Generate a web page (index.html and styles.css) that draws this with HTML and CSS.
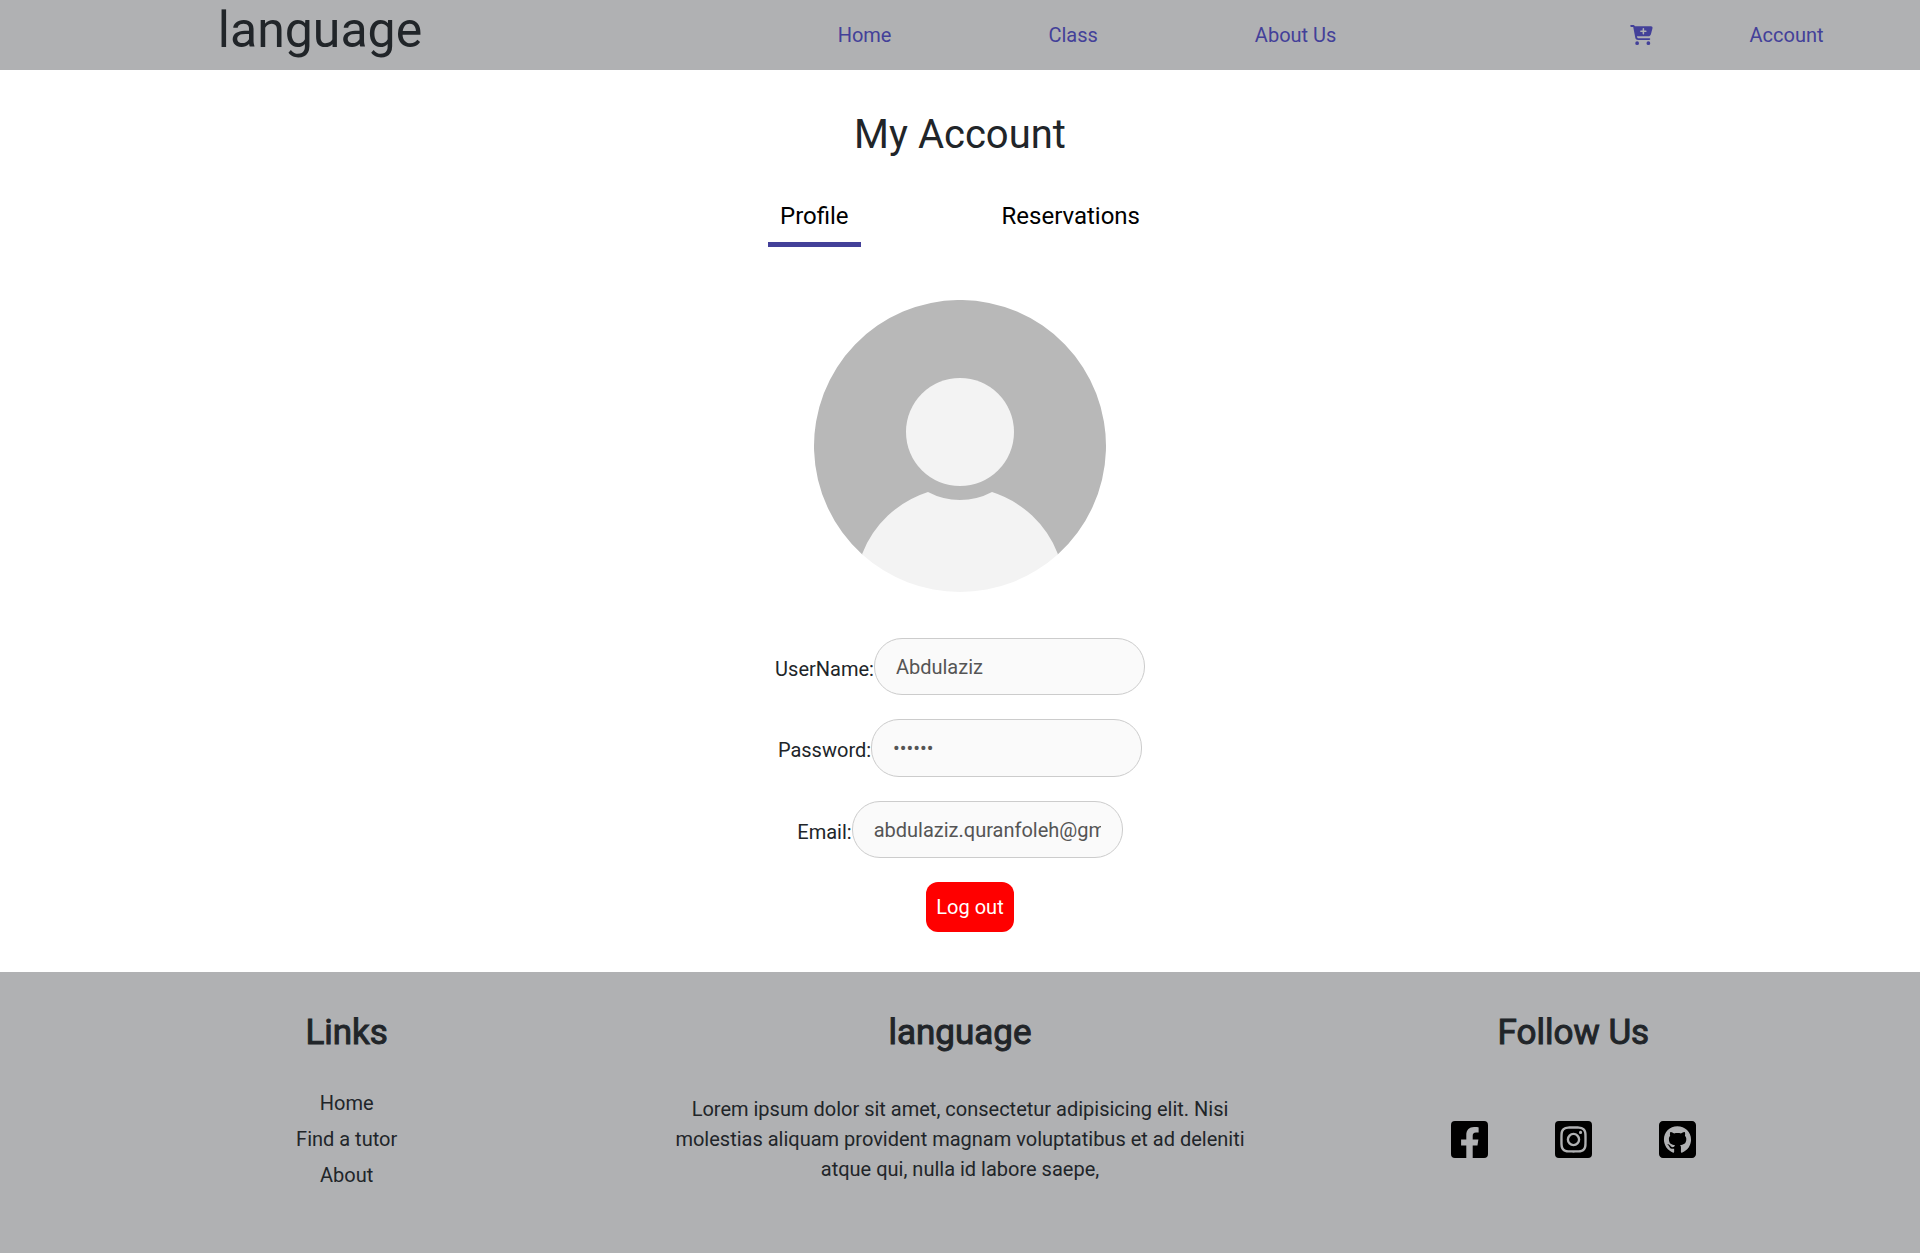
FILE: index.html
```html
<!DOCTYPE html>
<html lang="en">
<head>
<meta charset="utf-8">
<title>My Account</title>
<link rel="stylesheet" href="styles.css">
</head>
<body>
<header class="header">
  <a class="logo" href="#">language</a>
  <nav class="nav">
    <a href="#">Home</a>
    <a href="#">Class</a>
    <a href="#">About Us</a>
  </nav>
  <div class="actions">
    <a class="cart" href="#" aria-label="Cart">
      <svg viewBox="0 0 576 512" width="23" height="20" fill="currentColor"><path d="M24 0C10.700 0 0 10.700 0 24S10.700 48 24 48H69.500c3.800 0 7.100 2.700 7.900 6.500l51.600 271c6.500 34 36.200 58.500 70.700 58.500H488c13.300 0 24-10.700 24-24s-10.700-24-24-24H199.700c-11.500 0-21.400-8.200-23.600-19.500L170.700 288H459.200c32.600 0 61.100-21.800 69.500-53.300l41-152.300C576.600 57 557.400 32 531.100 32H360 120.100C111 12.800 91.600 0 69.500 0H24zM176 512a48 48 0 1 0 0-96 48 48 0 1 0 0 96zm336-48a48 48 0 1 0-96 0 48 48 0 1 0 96 0zM252 160c0-11 9-20 20-20h44V96c0-11 9-20 20-20s20 9 20 20v44h44c11 0 20 9 20 20s-9 20-20 20H356v44c0 11-9 20-20 20s-20-9-20-20V180H272c-11 0-20-9-20-20z"/></svg>
    </a>
    <a href="#">Account</a>
  </div>
</header>

<main class="account">
  <h1 class="title">My Account</h1>
  <nav class="tabs">
    <a class="tab tab-active" href="#">Profile</a>
    <a class="tab" href="#">Reservations</a>
  </nav>
  <svg class="avatar" viewBox="0 0 292 292" role="img" aria-label="Profile picture">
    <path d="M48 254.200A146 146 0 1 1 244 254.200L146 270z" fill="#b8b8b8"/>
    <path d="M48 254.200A105 105 0 0 1 114 192A68 68 0 0 0 178 192A105 105 0 0 1 244 254.200A146 146 0 0 1 48 254.200z" fill="#f3f3f3"/>
    <circle cx="146" cy="132" r="54" fill="#f3f3f3"/>
  </svg>
  <form class="form">
    <div class="field">
      <label for="username">UserName:</label>
      <input id="username" type="text" value="Abdulaziz">
    </div>
    <div class="field">
      <label for="password">Password:</label>
      <input id="password" type="password" value="secret">
    </div>
    <div class="field">
      <label for="email">Email:</label>
      <input id="email" type="email" value="abdulaziz.quranfoleh@gmail.com">
    </div>
    <button class="logout" type="button">Log out</button>
  </form>
</main>

<footer class="footer">
  <section class="column">
    <h2>Links</h2>
    <div class="content links">
      <a href="#">Home</a>
      <a href="#">Find a tutor</a>
      <a href="#">About</a>
    </div>
  </section>
  <section class="column">
    <h2>language</h2>
    <div class="content">
      <p>Lorem ipsum dolor sit amet, consectetur adipisicing elit. Nisi molestias aliquam provident magnam voluptatibus et ad deleniti atque qui, nulla id labore saepe,</p>
    </div>
  </section>
  <section class="column">
    <h2>Follow Us</h2>
    <div class="content social">
      <a href="#" aria-label="Facebook"><svg viewBox="0 32 448 448"><path d="M400 32H48A48 48 0 0 0 0 80v352a48 48 0 0 0 48 48h137.250V327.690h-63V256h63v-54.640c0-62.150 37-96.480 93.670-96.480 27.140 0 55.520 4.840 55.520 4.840v61h-31.270c-30.810 0-40.420 19.120-40.420 38.730V256h68.780l-11 71.690h-57.780V480H400a48 48 0 0 0 48-48V80a48 48 0 0 0-48-48z"/></svg></a>
      <a href="#" aria-label="Instagram"><svg viewBox="0 32 448 448"><path d="M224,202.660A53.340,53.340,0,1,0,277.360,256,53.380,53.380,0,0,0,224,202.660Zm124.710-41a54,54,0,0,0-30.410-30.410c-21-8.290-71-6.430-94.300-6.430s-73.250-1.930-94.310,6.430a54,54,0,0,0-30.410,30.410c-8.280,21-6.430,71.050-6.430,94.330S91,329.260,99.320,350.330a54,54,0,0,0,30.410,30.410c21,8.290,71,6.430,94.310,6.430s73.240,1.930,94.300-6.430a54,54,0,0,0,30.410-30.410c8.350-21,6.430-71.050,6.430-94.330S357.100,182.740,348.750,161.670ZM224,338a82,82,0,1,1,82-82A81.900,81.900,0,0,1,224,338Zm85.380-148.300a19.140,19.140,0,1,1,19.130-19.140A19.100,19.100,0,0,1,309.420,189.740ZM400,32H48A48,48,0,0,0,0,80V432a48,48,0,0,0,48,48H400a48,48,0,0,0,48-48V80A48,48,0,0,0,400,32ZM382.880,322c-1.290,25.630-7.140,48.340-25.850,67s-41.400,24.630-67,25.850c-26.410,1.490-105.590,1.490-132,0-25.630-1.290-48.260-7.150-67-25.850s-24.630-41.420-25.850-67c-1.490-26.420-1.490-105.610,0-132,1.290-25.630,7.070-48.340,25.850-67s41.470-24.560,67-25.780c26.410-1.490,105.590-1.490,132,0,25.630,1.290,48.330,7.150,67,25.850s24.630,41.420,25.850,67.050C384.370,216.440,384.370,295.560,382.880,322Z"/></svg></a>
      <a href="#" aria-label="GitHub"><svg viewBox="0 32 448 448"><path d="M400 32H48C21.500 32 0 53.500 0 80v352c0 26.500 21.500 48 48 48h352c26.500 0 48-21.500 48-48V80c0-26.500-21.500-48-48-48zM277.300 415.700c-8.400 1.500-11.500-3.700-11.500-8 0-5.400.2-33 .2-55.300 0-15.600-5.200-25.500-11.300-30.700 37-4.100 76-9.200 76-73.100 0-18.200-6.500-27.300-17.100-39 1.700-4.300 7.400-22-1.700-45-13.900-4.300-45.700 17.900-45.700 17.900-13.200-3.700-27.500-5.600-41.600-5.600-14.100 0-28.400 1.900-41.600 5.600 0 0-31.800-22.200-45.700-17.900-9.100 22.900-3.500 40.600-1.700 45-10.600 11.700-15.600 20.800-15.600 39 0 63.600 37.300 69 74.300 73.100-4.800 4.300-9.100 11.700-10.600 22.300-9.500 4.300-33.800 11.700-48.300-13.900-9.100-15.800-25.500-17.100-25.500-17.100-16.200-.2-1.100 10.200-1.100 10.200 10.800 5 18.400 24.200 18.400 24.200 9.700 29.700 56.100 19.700 56.100 19.700 0 13.900.2 36.500.2 40.600 0 4.300-3 9.500-11.500 8-66-22.100-112.200-84.900-112.200-158.300 0-91.800 70.200-161.500 162-161.500S388 165.600 388 257.400c.1 73.400-44.700 136.300-110.700 158.300z"/></svg></a>
    </div>
  </section>
</footer>
</body>
</html>
```
FILE: styles.css
```css
* {
  box-sizing: border-box;
}

body {
  margin: 0;
  min-height: 100vh;
  display: flex;
  flex-direction: column;
  font: 400 20px/30px Roboto, sans-serif;
  color: #212529;
  background: #fff;
}

a {
  color: inherit;
  text-decoration: none;
}

h1,
h2,
p {
  margin: 0;
  font-weight: 400;
}

.header {
  display: grid;
  grid-template-columns: 640fr 894fr 386fr;
  align-items: center;
  height: 70px;
  background: #b0b1b3;
  color: #434099;
}

.logo {
  padding-bottom: 10px;
  font-size: 50px;
  line-height: 60px;
  text-align: center;
  color: #212529;
}

.nav,
.actions {
  display: flex;
  justify-content: center;
  align-items: center;
}

.nav {
  gap: 157px;
}

.actions {
  gap: 96px;
}

.cart {
  display: flex;
}

.account {
  display: flex;
  flex-direction: column;
  align-items: center;
  padding: 40px 0;
}

.title {
  font-size: 40px;
  line-height: 50px;
}

.tabs {
  display: flex;
  justify-content: space-between;
  width: 20%;
  min-width: 320px;
  margin-top: 30px;
  font-size: 24px;
  line-height: 36px;
  color: #000;
}

.tab {
  padding: 8px 12px;
  border-bottom: 5px solid transparent;
}

.tab-active {
  border-color: #434099;
}

.avatar {
  width: 292px;
  height: 292px;
  margin: 53px 0 46px;
}

.form {
  display: flex;
  flex-direction: column;
  align-items: center;
  gap: 24px;
}

.field {
  display: flex;
  align-items: center;
}

.field label {
  padding-top: 4px;
}

.field input {
  width: 271px;
  height: 57px;
  padding: 0 21px;
  border: 1px solid #ccc;
  border-radius: 28px;
  background: #fafafa;
  font: inherit;
  color: #555;
}

.field input[type="password"] {
  height: 58px;
}

.logout {
  height: 50px;
  margin-left: 20px;
  padding: 0 10px;
  border: 0;
  border-radius: 12px;
  background: #f00;
  font: inherit;
  color: #fff;
}

.footer {
  flex: 1;
  display: grid;
  grid-template-columns: repeat(3, 1fr);
  padding: 40px;
  background: #b0b1b3;
  text-align: center;
}

.column h2 {
  margin-bottom: 34px;
  font-size: 35px;
  line-height: 42px;
  -webkit-text-stroke: 1px currentColor;
}

.content {
  display: flex;
  justify-content: center;
  align-items: center;
  min-height: 102px;
  padding: 0 16px;
}

.links {
  flex-direction: column;
  gap: 6px;
}

.social {
  gap: 67px;
}

.social a {
  display: flex;
}

.social svg {
  width: 37px;
  height: 37px;
  fill: #000;
}
```
